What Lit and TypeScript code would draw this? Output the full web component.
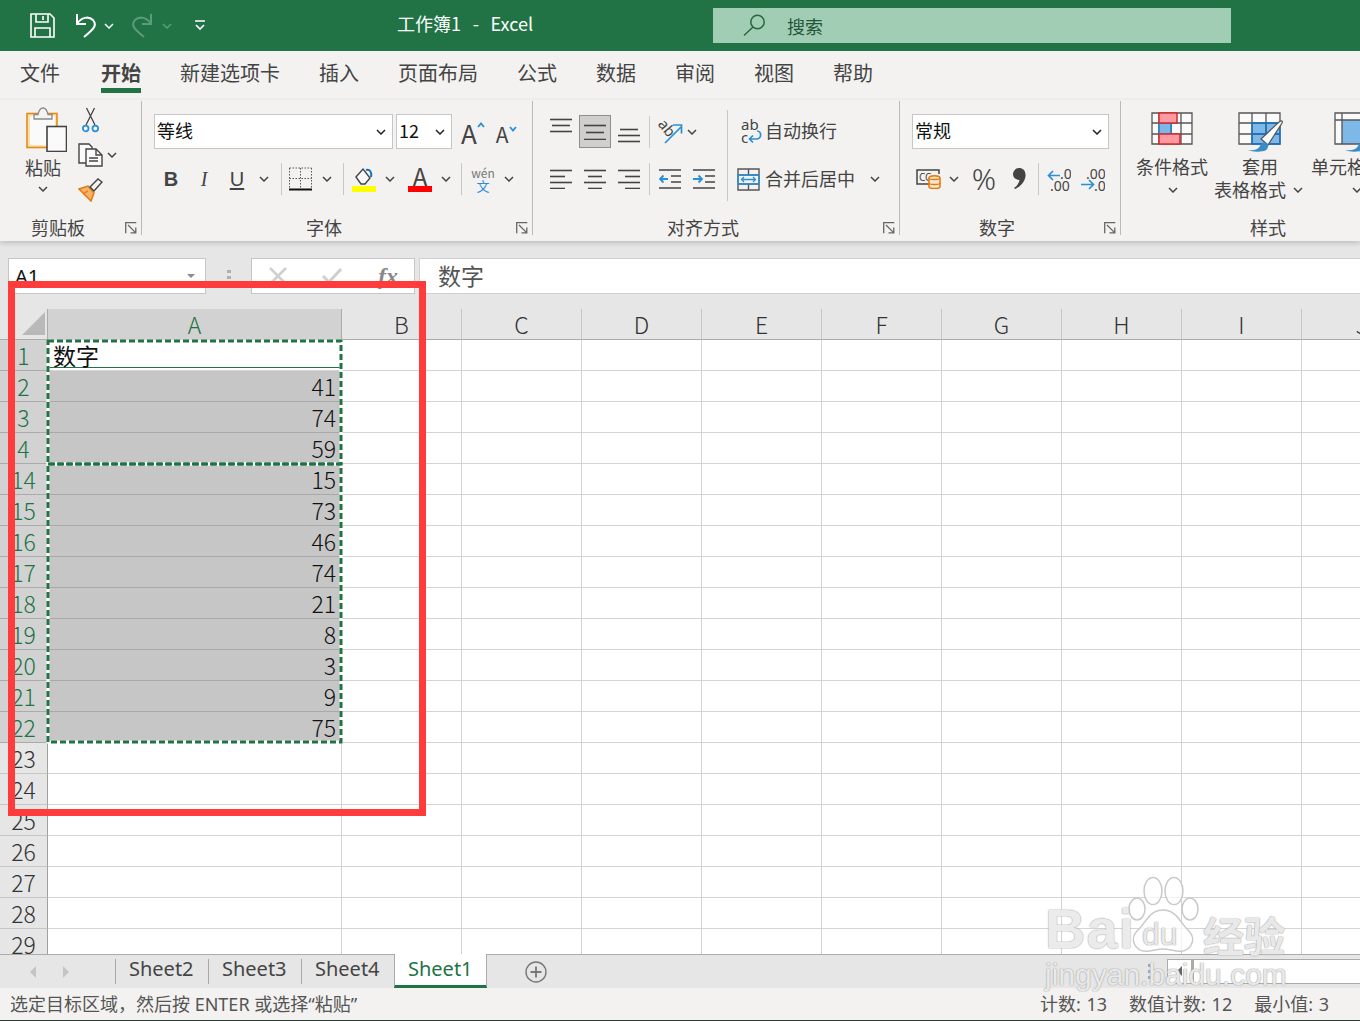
import { LitElement, html, css, svg } from "lit";
import { customElement } from "lit/decorators.js";

const BLUE = "#2b8fd6";
const DK = "#444";

const chev = (c = "#444") => html`<svg class="chev" width="10" height="6" viewBox="0 0 10 6"><path d="M1 1l4 4 4-4" fill="none" stroke=${c} stroke-width="1.5"/></svg>`;
const launcher = () => html`<svg class="launch" width="12" height="12" viewBox="0 0 12 12"><path d="M.7 11.3V.7h10.6M3 3l7.6 7.6M10.8 5.5v5.3H5.5" fill="none" stroke="#666" stroke-width="1.3"/></svg>`;

const lines = (w: number, h: number, rows: number[][]) => html`<svg width=${w} height=${h} viewBox="0 0 ${w} ${h}">${rows.map(
  ([y, a, b]) => svg`<path d="M${a} ${y + 0.5}H${b}" stroke="${DK}" stroke-width="1.6"/>`
)}</svg>`;

const icons = {
  save: html`<svg width="25" height="25" viewBox="0 0 25 25" fill="none" stroke="#fff" stroke-width="1.6"><path d="M1 1h19l4 4v19H1z"/><path d="M6 1v8h12V1M5 24v-9h15v9M13 3v4"/></svg>`,
  undo: html`<svg width="23" height="25" viewBox="0 0 23 25" fill="none" stroke="#fff" stroke-width="2"><path d="M2 1v10h9"/><path d="M2 11C6 4 14 3 18 7c4 5 2 8-9 17"/></svg>`,
  redo: html`<svg width="23" height="25" viewBox="0 0 23 25" fill="none" stroke="#5c9c7b" stroke-width="2"><path d="M21 1v10h-9"/><path d="M21 11C17 4 9 3 5 7c-4 5-2 8 9 17"/></svg>`,
  custom: html`<svg width="12" height="11" viewBox="0 0 12 11" fill="none" stroke="#fff" stroke-width="1.7"><path d="M1 1h10M2 5l4 4 4-4"/></svg>`,
  glass: html`<svg width="23" height="23" viewBox="0 0 23 23" fill="none" stroke="#26683f" stroke-width="1.5"><circle cx="14.5" cy="8" r="6.7"/><path d="M10 13l-9 8.5"/></svg>`,
  paste: html`<svg width="41" height="45" viewBox="0 0 41 45"><rect x="1" y="6.5" width="30" height="34" fill="#fbdfae" stroke="#e58a17" stroke-width="1.6"/><rect x="4" y="9" width="25" height="29" fill="#fafafa"/><path d="M8 12V7.5h4C13 3 14 1 17 1s4 2 5 6.5h4V12z" fill="#f4f3f1" stroke="#8a8a8a" stroke-width="1.3"/><rect x="21" y="19.5" width="19.5" height="25" fill="#fafafa" stroke="${DK}" stroke-width="1.6"/></svg>`,
  scissors: html`<svg width="17" height="26" viewBox="0 0 17 26" fill="none"><path d="M4 18L12.5 1M13 18L4.500 1" stroke="${DK}" stroke-width="1.3"/><circle cx="3.700" cy="21.500" r="2.800" stroke="${BLUE}" stroke-width="1.800"/><circle cx="13.300" cy="21.500" r="2.800" stroke="${BLUE}" stroke-width="1.800"/></svg>`,
  copy: html`<svg width="25" height="24" viewBox="0 0 25 24" fill="#fafafa" stroke="${DK}" stroke-width="1.4"><path d="M1 1h10l3 3v16H1z"/><path d="M8 6h10l6 6v11H8z"/><path d="M18 6v6h6M11 15h9M11 18h9" fill="none"/></svg>`,
  brush: html`<svg width="25" height="24" viewBox="0 0 25 24"><path d="M1 11l9-3 6 7-3 8z" fill="#f6b26b" stroke="#e2780c" stroke-width="1.5"/><path d="M5 16l5-3" stroke="#e2780c" stroke-width="1.300"/><path d="M12 9l8-8 4 3-8 9z" fill="#f4f3f1" stroke="${DK}" stroke-width="1.400"/></svg>`,
  caretUp: html`<svg class="caret" width="8" height="6" viewBox="0 0 8 6"><path d="M1 5l3-3.500L7 5" fill="none" stroke="${BLUE}" stroke-width="1.800"/></svg>`,
  caretDown: html`<svg class="caret" width="8" height="6" viewBox="0 0 8 6"><path d="M1 1l3 3.500L7 1" fill="none" stroke="${BLUE}" stroke-width="1.800"/></svg>`,
  borders: html`<svg width="23" height="24" viewBox="0 0 23 24" fill="none"><path d="M.5 1h22M.5 11.500h22M.5 1v20M22.500 1v20M11.500 1v20" stroke="#555" stroke-dasharray="1.500 1.500"/><path d="M0 22.500h23" stroke="#111" stroke-width="2"/></svg>`,
  fill: html`<svg width="24" height="25" viewBox="0 0 24 25"><path d="M4 10l7-8 7 9-5 6H9z" fill="#fafafa" stroke="#444" stroke-width="1.400"/><path d="M14 3c4-1 6 2 5 7" fill="none" stroke="#1273c4" stroke-width="2"/><rect y="19" width="24" height="6" fill="#ffff00"/></svg>`,
  alignTop: lines(23, 16, [[1, 0, 22], [7, 2, 20], [13, 0, 22]]),
  hiMid: lines(23, 16, [[1, 0, 22], [8, 2, 20], [15, 0, 22]]),
  alignBot: lines(23, 16, [[1, 2, 20], [7, 0, 22], [13, 0, 22]]),
  left: lines(23, 20, [[1, 0, 22], [7, 0, 15], [13, 0, 22], [19, 0, 15]]),
  center: lines(23, 20, [[1, 0, 22], [7, 4, 18], [13, 0, 22], [19, 4, 18]]),
  right: lines(23, 20, [[1, 0, 22], [7, 7, 22], [13, 0, 22], [19, 7, 22]]),
  orient: html`<svg width="26" height="24" viewBox="0 0 26 24"><text x="0" y="11" transform="rotate(50 7 8)" class="svgt" font-size="15" fill="#444">ab</text><path d="M8 23L24 7M16 5h8.500v8.500" fill="none" stroke="${BLUE}" stroke-width="1.700"/></svg>`,
  indentL: html`<svg width="23" height="20" viewBox="0 0 23 20" fill="none"><path d="M0 1h22M0 19h22M12 7h10M12 13h10" stroke="${DK}" stroke-width="1.500"/><path d="M9 10H1M4.500 6.500L1 10l3.500 3.500" stroke="${BLUE}" stroke-width="1.800"/></svg>`,
  indentR: html`<svg width="23" height="20" viewBox="0 0 23 20" fill="none"><path d="M0 1h22M0 19h22M12 7h10M12 13h10" stroke="${DK}" stroke-width="1.500"/><path d="M0 10h8M5.500 6.500L9 10l-3.500 3.500" stroke="${BLUE}" stroke-width="1.800"/></svg>`,
  wrap: html`<svg width="21" height="25" viewBox="0 0 21 25"><text x="0" y="11" class="svgt" font-size="15" fill="#444">ab</text><text x="0" y="24" class="svgt" font-size="15" fill="#444">c</text><path d="M16 12c5 0 5 8-1 8H9M12 16.500L8.500 20l3.500 3.500" fill="none" stroke="${BLUE}" stroke-width="1.700"/></svg>`,
  merge: html`<svg width="23" height="23" viewBox="0 0 23 23" fill="none"><path d="M1 1h21v21H1zM1 7h21M1 16h21M11.500 1v6M11.500 16v6" stroke="#555" stroke-width="1.400"/><path d="M1 7h21v9H1z" stroke="${BLUE}" stroke-width="1.500"/><path d="M4.500 11.500h14M7 9l-2.500 2.500L7 14M16 9l2.500 2.500L16 14" stroke="${BLUE}" stroke-width="1.300"/></svg>`,
  currency: html`<svg width="25" height="20" viewBox="0 0 25 20"><path d="M23 5V1H1v14h12" fill="none" stroke="${DK}" stroke-width="1.500"/><text x="3" y="12" class="svgt" font-size="10" fill="#444">CC</text><path d="M13 9c0-3 11-3 11 0v9c0 2-11 2-11 0z" fill="#fbe5c8" stroke="#e2780c" stroke-width="1.500"/><path d="M13 9c0 2 11 2 11 0M13 14c0 2 11 2 11 0" fill="none" stroke="#e2780c" stroke-width="1.300"/></svg>`,
  comma: html`<svg width="13" height="22" viewBox="0 0 13 22"><path d="M6 0c4 0 7 3 6.500 8C12 14 7 19 2 21l-1-1c3-2 5-5 5.500-8C3 12 0 9.500 0 6.500 0 3 3 0 6 0z" fill="#444"/></svg>`,
  decL: html`<svg width="24" height="23" viewBox="0 0 24 23"><path d="M13 7.500H1.500M6 3L1.500 7.500 6 12" fill="none" stroke="${BLUE}" stroke-width="1.700"/><text x="13" y="11" class="svgt" font-size="14" fill="#444">.0</text><text x="3" y="23" class="svgt" font-size="14" fill="#444">.00</text></svg>`,
  decR: html`<svg width="24" height="23" viewBox="0 0 24 23"><text x="5" y="11" class="svgt" font-size="14" fill="#444">.00</text><path d="M0 16.500h12M8 12l4.500 4.500L8 21" fill="none" stroke="${BLUE}" stroke-width="1.700"/><text x="13" y="23" class="svgt" font-size="14" fill="#444">.0</text></svg>`,
  cond: html`<svg width="42" height="33" viewBox="0 0 42 33"><rect x="1" y="1" width="40" height="31" fill="#fafafa"/><path d="M1 1h40v31H1zM1 11h40M1 22h40M8 1v31M20 1v31M30 1v31" fill="none" stroke="#555" stroke-width="1.300"/><rect x="8" y="11" width="12" height="11" fill="#7db8e8" stroke="#1673c5" stroke-width="1.300"/><path d="M8 1h18v10H8zM8 22h21v10H8z" fill="#ff9aa2" stroke="#d02b2b" stroke-width="1.500"/></svg>`,
  table: html`<svg width="45" height="40" viewBox="0 0 45 40"><rect x="1" y="1" width="41" height="31" fill="#fafafa"/><rect x="14" y="11" width="28" height="21" fill="#7db8e8"/><path d="M1 1h41v31H1zM1 11h41M1 22h41M14 1v31M28 1v31" fill="none" stroke="#555" stroke-width="1.300"/><path d="M14 11h28v21H14zM14 22h28M28 11v21" fill="none" stroke="#1673c5" stroke-width="1.300"/><path d="M23 27L41 10c3-2 4-1 3 1L30 33z" fill="#fafafa" stroke="#555" stroke-width="1.200"/><path d="M10 38c5 1 10 0 12-4 1-3 4-5 7-3 2 3 1 7-3 8-5 1-12 1-16-1z" fill="#3a8cc9"/></svg>`,
  cell: html`<svg width="45" height="40" viewBox="0 0 45 40"><rect x="1" y="1" width="41" height="31" fill="#fafafa"/><rect x="8" y="8" width="34" height="24" fill="#7db8e8"/><path d="M1 1h41v31H1zM1 8h41M8 1v31" fill="none" stroke="#555" stroke-width="1.300"/><path d="M11 38c5 1 11 0 13-4 1-3 4-5 6-3 2 3 1 7-3 8-5 1-12 1-16-1z" fill="#3a8cc9"/></svg>`,
  navL: html`<svg width="8" height="12" viewBox="0 0 8 12"><path d="M7 0L1 6l6 6z" fill="#c4c4c4"/></svg>`,
  navR: html`<svg width="8" height="12" viewBox="0 0 8 12"><path d="M1 0l6 6-6 6z" fill="#c4c4c4"/></svg>`,
  plus: html`<svg width="22" height="22" viewBox="0 0 22 22" fill="none" stroke="#777"><circle cx="11" cy="11" r="10" stroke-width="1.400"/><path d="M11 5.500v11M5.500 11h11" stroke-width="1.800"/></svg>`,
  cross: html`<svg width="18" height="18" viewBox="0 0 18 18"><path d="M1 1l16 16M17 1L1 17" stroke="#cfcfcf" stroke-width="2.500"/></svg>`,
  check: html`<svg width="20" height="16" viewBox="0 0 20 16"><path d="M1 8l6 6L19 1" fill="none" stroke="#cfcfcf" stroke-width="3"/></svg>`,
  paw: html`<svg width="74" height="78" viewBox="0 0 74 78" fill="rgba(255,255,255,.75)" stroke="#c9c9c9" stroke-width="1.500"><ellipse cx="11" cy="33" rx="8" ry="11"/><ellipse cx="27" cy="15" rx="9" ry="13.500"/><ellipse cx="48" cy="15" rx="9" ry="13.500"/><ellipse cx="64" cy="33" rx="8" ry="11"/><path d="M37 34c14 0 17 13 26 21 8 8 2 22-12 20-6-1-10-2-14-2s-8 1-14 2C9 77 3 63 11 55c9-8 12-21 26-21z"/></svg>`,
};

const ROWS = ["1", "2", "3", "4", "14", "15", "16", "17", "18", "19", "20", "21", "22", "23", "24", "25", "26", "27", "28", "29"];
const VALUES: Record<string, string> = { "2": "41", "3": "74", "4": "59", "14": "15", "15": "73", "16": "46", "17": "74", "18": "21", "19": "8", "20": "3", "21": "9", "22": "75" };
const COLS = ["B", "C", "D", "E", "F", "G", "H", "I", "J"];
const TABS = ["文件", "开始", "新建选项卡", "插入", "页面布局", "公式", "数据", "审阅", "视图", "帮助"];

@customElement("app-root")
export class AppRoot extends LitElement {
  static styles = css`
    :host { display: block; position: relative; width: 1360px; height: 1021px; overflow: hidden;
      font-family: "Noto Sans CJK SC", "Noto Sans", sans-serif; background: #e6e6e6; color: #444; }
    * { box-sizing: border-box; }
    svg { display: block; flex: none; }
    .svgt { font-family: "Noto Sans", sans-serif; }
    .app { display: flex; flex-direction: column; height: 1021px; }

    .title { height: 51px; flex: none; background: #217346; display: flex; align-items: center; color: #fff; }
    .qat { display: flex; align-items: center; width: 397px; padding-left: 30px; }
    .qat .undo { margin-left: 20px; }
    .qat .c1 { margin-left: 6px; }
    .qat .redo { margin-left: 16px; }
    .qat .c2 { margin-left: 9px; }
    .qat .cust { margin-left: 22px; }
    .doc { width: 316px; font-size: 18px; line-height: 24px; white-space: pre; word-spacing: 1.800px; margin-bottom: 6px; }
    .search { width: 518px; height: 35px; background: #a0cdb3; display: flex; align-items: center; padding-left: 30px; gap: 21px; font-size: 18px; color: #24563a; }

    .tabs { height: 49px; flex: none; background: #f3f2f1; display: flex; gap: 39px; padding-left: 20px; }
    .tab { height: 42px; font-size: 20px; line-height: 44px; color: #444; white-space: nowrap; }
    .tab:first-child { margin-right: 2px; }
    .tab.on { font-weight: 700; border-bottom: 5px solid #217346; height: 42px; }

    .ribbon { height: 141px; flex: none; background: #f3f2f1; display: flex; padding-top: 1px; overflow: hidden; box-shadow: 0 2px 5px rgba(0,0,0,.18); position: relative; z-index: 1; }
    .group { height: 134px; flex: none; display: flex; flex-direction: column; border-right: 1px solid #b9b9b9; }
    .g1 { width: 142px; } .g2 { width: 391px; } .g3 { width: 367px; } .g4 { width: 221px; } .g5 { width: 300px; border-right: 0; }
    .tools { height: 120px; flex: none; }
    .foot { height: 14px; flex: none; display: flex; align-items: center; font-size: 18px; line-height: 14px; color: #444; padding-right: 4px; padding-bottom: 2px; }
    .foot .launch { margin-left: auto; margin-top: 2px; }
    .g1 .foot { padding-left: 31px; } .g2 .foot { padding-left: 164px; } .g3 .foot { padding-left: 134px; } .g4 .foot { padding-left: 79px; } .g5 .foot { padding-left: 129px; }

    .stack { display: flex; flex-direction: column; gap: 13px; padding-top: 13px; }
    .row1 { height: 35px; display: flex; align-items: center; }
    .row2 { height: 34px; display: grid; align-items: center; justify-items: center; }
    .sel { height: 35px; background: #fff; border: 1.5px solid #c6c6c6; display: flex; align-items: center; justify-content: space-between; padding: 0 6px 3px 2px; font-size: 18px; color: #111; }
    .sel .chev { margin-top: 3px; }
    .sep { width: 1px; height: 32px; background: #c8c8c8; }

    .clip { display: flex; }
    .pastecol { width: 58px; margin-left: 14px; padding-top: 6px; display: flex; flex-direction: column; align-items: center; font-size: 18px; line-height: 23px; }
    .pastecol .pi { margin-left: 7px; }
    .pastecol .lab { margin-top: 4px; }
    .pastecol .chev { margin-top: 7px; }
    .smallcol { padding: 6px 0 0 6px; display: flex; flex-direction: column; gap: 10px; }
    .smallcol .s { margin-left: 4px; }
    .smallcol .cp { display: flex; align-items: center; gap: 4px; }
    .smallcol .br { margin-top: 1px; }

    .f1 { padding-left: 12px; gap: 3px; }
    .fontname { width: 239px; }
    .fontsize { width: 56px; }
    .grow { display: flex; align-items: flex-start; color: #444; line-height: 1; }
    .grow.big { margin-left: 6px; font-size: 26px; padding-top: 2px; }
    .grow.small { margin-left: 8px; font-size: 21px; padding-top: 5px; }
    .grow .caret { margin-top: 2px; }
    .f2 { padding-left: 14px; grid-template-columns: 30px 36px 30px 24px 10px 29px 24px 8px 34px 18px 42px 10px 21px 22px 30px; }
    .bi { font-size: 20px; line-height: 24px; font-family: "Liberation Sans", sans-serif; }
    .b { font-weight: 700; }
    .i { font-style: italic; font-family: "Liberation Serif", serif; }
    .u { text-decoration: underline; text-underline-offset: 2px; font-weight: 300; }
    .colorA { width: 24px; display: flex; flex-direction: column; align-items: center; font-size: 24px; line-height: 20px; height: 26px; }
    .colorA .bar { width: 24px; height: 6px; background: #ff0000; }
    .colorA .t { height: 20px; }
    .wen { display: flex; flex-direction: column; align-items: center; font-size: 12px; line-height: 12px; color: #777; }
    .wen b { font-weight: 400; color: #2b8fd6; font-size: 13px; line-height: 13px; }

    .alignwrap { display: flex; }
    .alignL { width: 194px; padding-left: 11px; }
    .a1 { display: grid; grid-template-columns: 34px 34px 34px 6px 36px 32px; align-items: center; justify-items: center; height: 35px; }
    .a2 { grid-template-columns: 34px 34px 34px 6px 36px 32px; }
    .a1 .top { align-self: start; margin-top: 4px; }
    .a1 .bot { align-self: end; margin-bottom: 5px; }
    .a1 .hi { width: 32px; height: 33px; background: #d0cfcd; border: 1px solid #8e8e8e; display: flex; align-items: center; justify-content: center; }
    .a1 .or { grid-column: 5 / 7; display: flex; align-items: center; gap: 4px; justify-self: start; margin-left: 5px; }
    .bigsep { width: 1px; height: 91px; margin-top: 9px; background: #c8c8c8; flex: none; }
    .alignR { flex: 1; }
    .wrapbtn { height: 35px; display: flex; align-items: center; padding-left: 13px; gap: 3px; font-size: 18px; white-space: nowrap; }
    .wrapbtn span { margin-bottom: 3px; }
    .mergebtn { height: 34px; display: flex; align-items: center; padding-left: 9px; gap: 5px; font-size: 18px; white-space: nowrap; }
    .mergebtn span { margin-bottom: 2px; }
    .mergebtn .chev { margin-left: 10px; }

    .n1 { padding-left: 12px; }
    .numfmt { width: 197px; }
    .n2 { padding-left: 12px; grid-template-columns: 32px 20px 40px 30px 8px 34px 34px; }
    .pct { font-size: 30px; line-height: 34px; font-family: "Noto Sans", sans-serif; font-weight: 300; color: #444; }

    .styles { display: grid; grid-template-columns: 92px 84px 108px; margin-left: 5px; padding-top: 11px; }
    .sbtn { display: flex; flex-direction: column; align-items: center; font-size: 18px; line-height: 23px; white-space: nowrap; margin-top: -1px; }
    .sbtn .ic { height: 39px; margin-bottom: 4px; margin-top: 1px; }
    .sbtn .chev { margin-top: 9px; margin-left: 2px; }
    .sbtn .ln { display: flex; align-items: center; gap: 5px; margin-left: -3px; }
    .sbtn .ln .chev { margin-top: 0; }

    .fbar { height: 68px; flex: none; background: #e6e6e6; padding-top: 17px; display: flex; align-items: flex-start; }
    .namebox { width: 198px; height: 36px; margin-left: 8px; background: #fff; border: 1.5px solid #c6c6c6; display: flex; align-items: center; justify-content: space-between; padding: 0 10px 0 6px; font-size: 20px; color: #111; font-family: "Noto Sans", sans-serif; }
    .tri { width: 0; height: 0; border-left: 4px solid transparent; border-right: 4px solid transparent; border-top: 4px solid #8a8a8a; }
    .grip { width: 45px; display: flex; flex-direction: column; align-items: center; gap: 3px; padding-top: 12px; }
    .grip i { width: 4px; height: 3px; background: #b0b0b0; }
    .fnbox { width: 164px; height: 36px; background: #fff; border: 1.5px solid #c6c6c6; display: grid; grid-template-columns: 52px 56px 56px; align-items: center; justify-items: center; color: #b5b5b5; }
    .fx { font-family: "Liberation Serif", serif; font-style: italic; font-weight: 700; font-size: 24px; color: #888; }
    .input { flex: 1; height: 36px; margin-left: 4px; background: #fff; border: 1.5px solid #d0d0d0; border-right: 0; padding-left: 18px; font-size: 23px; line-height: 32px; color: #555; }

    .sheet { height: 645px; flex: none; position: relative; overflow: hidden; background: #fff; }
    .grid { display: grid; grid-template-columns: 48px 294px repeat(9, 120px); grid-auto-rows: 31px; width: 1422px; }
    .c { border-right: 1px solid #d4d4d4; border-bottom: 1px solid #d4d4d4; font-size: 23px; line-height: 30px; color: #111; overflow: hidden; white-space: nowrap; font-weight: 300; }
    .corner { background: #e6e6e6; border-right: 1px solid #ababab; border-bottom: 1px solid #ababab; position: relative; }
    .corner::after { content: ""; position: absolute; right: 2px; bottom: 4px; border-style: solid; border-width: 0 0 23px 23px; border-color: transparent transparent #b9b9b9 transparent; }
    .ch { background: #e6e6e6; border-right: 1px solid #c6c6c6; border-bottom: 1px solid #ababab; text-align: center; color: #333; }
    .ch.on { background: #d2d2d2; color: #217346; border-right-color: #ababab; }
    .rh { background: #e6e6e6; border-right: 1px solid #a0a0a0; border-bottom: 1px solid #c6c6c6; text-align: center; color: #333; }
    .rh.on { background: #d2d2d2; color: #217346; border-bottom-color: #ababab; border-right-color: #217346; }
    .sv { background: #c6c6c6; border-bottom-color: #a9a9a9; border-right-color: #c6c6c6; text-align: right; padding-right: 5px; }
    .active { padding-left: 5px; font-weight: 400; box-shadow: inset 0 -2px 0 #fff, inset 0 -3px 0 #217346; }
    .ants { position: absolute; left: 46px; top: 30px; }

    .tabsbar { height: 34px; flex: none; background: #e6e6e6; border-top: 1px solid #ababab; display: flex; font-size: 20px; color: #444; font-family: "Noto Sans", "Noto Sans CJK SC", sans-serif; }
    .nav { width: 115px; padding-left: 29px; display: flex; align-items: center; gap: 25px; }
    .stab { height: 33px; padding: 0 14px 0 13px; display: flex; align-items: center; white-space: nowrap; width: 93px; }
    .stab.s { border-left: 1px solid #a8a8a8; height: 25px; margin-top: 4px; padding-bottom: 7px; }
    .stab.cur { background: #fff; color: #217346; border-bottom: 3px solid #217346; border-left: 1px solid #ababab; border-right: 1px solid #ababab; margin-top: -1px; height: 34px; padding-bottom: 3px; }
    .addb { margin-left: 38px; display: flex; align-items: center; }
    .hscroll { margin-left: auto; display: flex; align-items: center; width: 212px; height: 26px; margin-top: 3px; }
    .hdots { width: 19px; display: flex; flex-direction: column; align-items: flex-start; gap: 3px; padding-top: 1px; }
    .hdots i { width: 3px; height: 3px; background: #a8a8a8; }
    .sb { height: 25px; background: #fff; border: 1px solid #ababab; }
    .sbl { width: 25px; display: flex; align-items: center; justify-content: center; }
    .sbr { flex: 1; border-left: 2px solid #ababab; border-right: 0; }
    .sarrow { width: 0; height: 0; border-top: 5px solid transparent; border-bottom: 5px solid transparent; border-right: 5px solid #666; }

    .status { height: 33px; flex: none; background: #f3f2f1; border-bottom: 1px solid #2e3b35; display: flex; align-items: center; font-size: 18px; color: #555; padding: 0 31px 2px 10px; white-space: nowrap; font-family: "Noto Sans", "Noto Sans CJK SC", sans-serif; }
    .status .r { margin-left: auto; display: flex; gap: 22px; word-spacing: 1px; }

    .redbox { position: absolute; left: 8px; top: 281px; width: 418px; height: 535px; border: 7.5px solid #ff3b3b; pointer-events: none; z-index: 3; }

    .wm { position: absolute; left: 1045px; top: 876px; width: 250px; height: 118px; z-index: 4; color: rgba(255,255,255,.8); font-family: "Liberation Sans", sans-serif; text-shadow: 0 0 1.5px #999, 0 0 1px #aaa; pointer-events: none; }
    .wm .bai { position: absolute; left: 0; top: 23px; font-size: 56px; line-height: 60px; font-weight: 700; letter-spacing: 1px; }
    .wm .pawb { position: absolute; left: 81px; top: 0; }
    .wm .du { position: absolute; left: 97px; top: 40px; font-size: 32px; line-height: 36px; }
    .wm .jy { position: absolute; left: 158px; top: 36px; font-size: 41px; line-height: 44px; font-family: "Noto Sans CJK SC", sans-serif; font-weight: 700; white-space: nowrap; }
    .wm .url { position: absolute; left: 0; top: 80px; font-size: 30px; line-height: 38px; white-space: nowrap; }
  `;

  private clipboard() {
    return html`<div class="group g1">
      <div class="tools clip">
        <div class="pastecol"><div class="pi">${icons.paste}</div><div class="lab">粘贴</div>${chev()}</div>
        <div class="smallcol">
          <div class="s">${icons.scissors}</div>
          <div class="cp">${icons.copy}${chev()}</div>
          <div class="br">${icons.brush}</div>
        </div>
      </div>
      <div class="foot">剪贴板${launcher()}</div>
    </div>`;
  }

  private fontGroup() {
    return html`<div class="group g2">
      <div class="tools stack">
        <div class="row1 f1">
          <div class="sel fontname">等线${chev("#222")}</div>
          <div class="sel fontsize">12${chev("#222")}</div>
          <div class="grow big">A${icons.caretUp}</div>
          <div class="grow small">A${icons.caretDown}</div>
        </div>
        <div class="row2 f2">
          <span class="bi b">B</span><span class="bi i">I</span><span class="bi u">U</span>${chev()}
          <div class="sep"></div>${icons.borders}${chev()}
          <div class="sep"></div>${icons.fill}${chev()}
          <div class="colorA"><div class="t">A</div><div class="bar"></div></div>${chev()}
          <div class="sep"></div>
          <div class="wen"><span>wén</span><b>文</b></div>${chev()}
        </div>
      </div>
      <div class="foot">字体${launcher()}</div>
    </div>`;
  }

  private alignGroup() {
    return html`<div class="group g3">
      <div class="tools alignwrap">
        <div class="alignL stack">
          <div class="a1">
            <div class="top">${icons.alignTop}</div>
            <div class="hi">${icons.hiMid}</div>
            <div class="bot">${icons.alignBot}</div>
            <div class="sep"></div>
            <div class="or">${icons.orient}${chev()}</div>
          </div>
          <div class="row2 a2">
            ${icons.left}${icons.center}${icons.right}<div class="sep"></div>${icons.indentL}${icons.indentR}
          </div>
        </div>
        <div class="bigsep"></div>
        <div class="alignR stack">
          <div class="wrapbtn">${icons.wrap}<span>自动换行</span></div>
          <div class="mergebtn">${icons.merge}<span>合并后居中</span>${chev()}</div>
        </div>
      </div>
      <div class="foot">对齐方式${launcher()}</div>
    </div>`;
  }

  private numberGroup() {
    return html`<div class="group g4">
      <div class="tools stack">
        <div class="row1 n1"><div class="sel numfmt">常规${chev("#222")}</div></div>
        <div class="row2 n2">
          ${icons.currency}${chev()}<span class="pct">%</span>${icons.comma}<div class="sep"></div>${icons.decL}${icons.decR}
        </div>
      </div>
      <div class="foot">数字${launcher()}</div>
    </div>`;
  }

  private stylesGroup() {
    return html`<div class="group g5">
      <div class="tools styles">
        <div class="sbtn"><div class="ic">${icons.cond}</div>条件格式${chev()}</div>
        <div class="sbtn"><div class="ic">${icons.table}</div>套用<div class="ln">表格格式${chev()}</div></div>
        <div class="sbtn"><div class="ic">${icons.cell}</div>单元格样式${chev()}</div>
      </div>
      <div class="foot">样式</div>
    </div>`;
  }

  private gridCells() {
    return html`<div class="grid">
      <div class="c corner"></div>
      <div class="c ch on">A</div>
      ${COLS.map((c) => html`<div class="c ch">${c}</div>`)}
      ${ROWS.map((r) => {
        const n = Number(r);
        const on = n <= 22;
        const val = VALUES[r];
        return html`
          <div class="c rh ${on ? "on" : ""}">${r}</div>
          ${r === "1"
            ? html`<div class="c active">数字</div>`
            : val
              ? html`<div class="c sv">${val}</div>`
              : html`<div class="c"></div>`}
          ${COLS.map(() => html`<div class="c"></div>`)}
        `;
      })}
    </div>`;
  }

  render() {
    return html`<div class="app">
      <div class="title">
        <div class="qat">
          ${icons.save}
          <span class="undo">${icons.undo}</span><span class="c1">${chev("#fff")}</span>
          <span class="redo">${icons.redo}</span><span class="c2">${chev("#5c9c7b")}</span>
          <span class="cust">${icons.custom}</span>
        </div>
        <div class="doc">工作簿1  -  Excel</div>
        <div class="search">${icons.glass}<span>搜索</span></div>
      </div>
      <div class="tabs">${TABS.map((t, i) => html`<div class="tab ${i === 1 ? "on" : ""}">${t}</div>`)}</div>
      <div class="ribbon">
        ${this.clipboard()}${this.fontGroup()}${this.alignGroup()}${this.numberGroup()}${this.stylesGroup()}
      </div>
      <div class="fbar">
        <div class="namebox">A1<span class="tri"></span></div>
        <div class="grip"><i></i><i></i><i></i></div>
        <div class="fnbox">${icons.cross}${icons.check}<span class="fx">fx</span></div>
        <div class="input">数字</div>
      </div>
      <div class="sheet">
        ${this.gridCells()}
        <svg class="ants" width="298" height="406" viewBox="0 0 298 406" fill="none">
          <rect x="2" y="2" width="293" height="123" stroke="#fff" stroke-width="3"/>
          <rect x="2" y="125" width="293" height="278" stroke="#fff" stroke-width="3"/>
          <rect x="2" y="2" width="293" height="123" stroke="#217346" stroke-width="3" stroke-dasharray="6 3"/>
          <rect x="2" y="125" width="293" height="278" stroke="#217346" stroke-width="3" stroke-dasharray="6 3"/>
        </svg>
      </div>
      <div class="tabsbar">
        <div class="nav">${icons.navL}${icons.navR}</div>
        <div class="stab s">Sheet2</div>
        <div class="stab s">Sheet3</div>
        <div class="stab s">Sheet4</div>
        <div class="stab cur">Sheet1</div>
        <div class="addb">${icons.plus}</div>
        <div class="hscroll">
          <div class="hdots"><i></i><i></i><i></i></div>
          <div class="sb sbl"><span class="sarrow"></span></div>
          <div class="sb sbr"></div>
        </div>
      </div>
      <div class="status">
        <span>选定目标区域，然后按 ENTER 或选择“粘贴”</span>
        <div class="r"><span>计数: 13</span><span>数值计数: 12</span><span>最小值: 3</span></div>
      </div>
    </div>
    <div class="redbox"></div>
    <div class="wm">
      <div class="bai">Bai</div>
      <div class="pawb">${icons.paw}</div>
      <div class="du">du</div>
      <div class="jy">经验</div>
      <div class="url">jingyan.baidu.com</div>
    </div>`;
  }
}
